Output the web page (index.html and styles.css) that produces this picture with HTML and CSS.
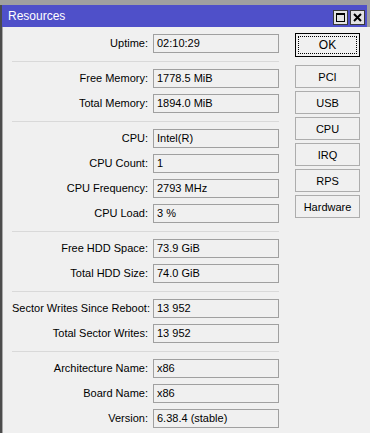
FILE: index.html
```html
<!DOCTYPE html>
<html>
<head>
<meta charset="utf-8">
<link rel="stylesheet" href="styles.css">
</head>
<body>
<div class="window">
  <div class="titlebar">
    <span class="title">Resources</span>
    <div class="tb-buttons">
      <span class="tb-btn">
        <svg width="13" height="13" viewBox="0 0 13 13"><rect x="2.5" y="2.5" width="8" height="8" fill="none" stroke="#000" stroke-width="1"/><rect x="2" y="2" width="9" height="2" fill="#000"/></svg>
      </span>
      <span class="tb-btn">
        <svg width="13" height="13" viewBox="0 0 13 13"><path d="M3 3 L10 10 M10 3 L3 10" stroke="#000" stroke-width="2"/></svg>
      </span>
    </div>
  </div>
  <div class="content">
    <div class="form">
      <div class="row"><label>Uptime:</label><div class="field">02:10:29</div></div>
      <div class="sep"></div>
      <div class="row"><label>Free Memory:</label><div class="field">1778.5 MiB</div></div>
      <div class="row"><label>Total Memory:</label><div class="field">1894.0 MiB</div></div>
      <div class="sep"></div>
      <div class="row"><label>CPU:</label><div class="field">Intel(R)</div></div>
      <div class="row"><label>CPU Count:</label><div class="field">1</div></div>
      <div class="row"><label>CPU Frequency:</label><div class="field">2793 MHz</div></div>
      <div class="row"><label>CPU Load:</label><div class="field">3 %</div></div>
      <div class="sep"></div>
      <div class="row"><label>Free HDD Space:</label><div class="field">73.9 GiB</div></div>
      <div class="row"><label>Total HDD Size:</label><div class="field">74.0 GiB</div></div>
      <div class="sep"></div>
      <div class="row"><label>Sector Writes Since Reboot:</label><div class="field">13 952</div></div>
      <div class="row"><label>Total Sector Writes:</label><div class="field">13 952</div></div>
      <div class="sep"></div>
      <div class="row"><label>Architecture Name:</label><div class="field">x86</div></div>
      <div class="row"><label>Board Name:</label><div class="field">x86</div></div>
      <div class="row"><label>Version:</label><div class="field">6.38.4 (stable)</div></div>
    </div>
    <div class="buttons">
      <button class="btn ok"><span class="focus">OK</span></button>
      <button class="btn">PCI</button>
      <button class="btn">USB</button>
      <button class="btn">CPU</button>
      <button class="btn">IRQ</button>
      <button class="btn">RPS</button>
      <button class="btn">Hardware</button>
    </div>
  </div>
</div>
</body>
</html>
```
FILE: styles.css
```css
html, body {
  margin: 0;
  padding: 0;
  background: #a0a0a0;
  width: 370px;
  height: 433px;
  overflow: hidden;
  font-family: "Liberation Sans", Arial, sans-serif;
  font-size: 11px;
  color: #000;
}
.window {
  margin-top: 5px;
  height: 428px;
  border-left: 2px solid #4c4c4c;
  display: flex;
  flex-direction: column;
}
.titlebar {
  height: 22px;
  margin-right: 3px;
  background: #4f50c9;
  display: flex;
  align-items: center;
  justify-content: space-between;
  padding-left: 6px;
}
.title {
  color: #fff;
  font-size: 12px;
}
.tb-buttons {
  display: flex;
  gap: 2px;
  margin-right: 2px;
  margin-top: 3px;
}
.tb-btn {
  width: 15px;
  height: 15px;
  box-sizing: border-box;
  border: 1px solid #3a3a3a;
  background: #e3e3e3;
  display: flex;
}
.content {
  flex: 1;
  background: #f0f0f0;
  border-left: 1px solid #a8a8a8;
  display: flex;
  padding: 7px 0 0 9px;
}
.form {
  width: 267px;
  display: flex;
  flex-direction: column;
  gap: 6px;
}
.row {
  display: flex;
  height: 19px;
}
.row label {
  width: 136px;
  text-align: right;
  line-height: 19px;
  margin-right: 5px;
  white-space: nowrap;
}
.field {
  width: 126px;
  height: 19px;
  box-sizing: border-box;
  border: 1px solid #a0a0a0;
  padding-left: 3px;
  line-height: 17px;
  white-space: nowrap;
}
.sep {
  height: 1px;
  background: #d9d9d9;
  margin: 2px 0 1px 0;
}
.buttons {
  margin-left: 16px;
  margin-top: -1px;
  display: flex;
  flex-direction: column;
  gap: 3px;
}
.btn {
  width: 65px;
  height: 23px;
  box-sizing: border-box;
  border: 1px solid #adadad;
  background: #f0f0f0;
  font-family: "Liberation Sans", Arial, sans-serif;
  font-size: 11px;
  color: #000;
  padding: 0;
  margin: 0;
  display: flex;
  align-items: center;
  justify-content: center;
}
.btn.ok {
  height: 24px;
  border: 1px solid #000;
  padding: 2px;
  margin-bottom: 5px;
}
.focus {
  flex: 1;
  align-self: stretch;
  border: 1px dotted #000;
  display: flex;
  align-items: center;
  justify-content: center;
  font-size: 12px;
}
```
